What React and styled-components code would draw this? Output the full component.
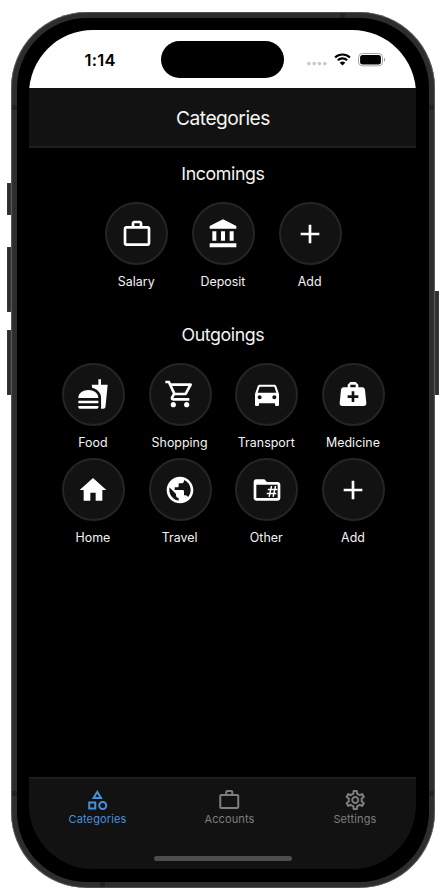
import React from "react";
import styled, { createGlobalStyle, css } from "styled-components";
import {
  MdWorkOutline,
  MdAccountBalance,
  MdAdd,
  MdFastfood,
  MdOutlineShoppingCart,
  MdDirectionsCar,
  MdHome,
  MdPublic,
  MdOutlineCategory,
  MdOutlineSettings,
} from "react-icons/md";

const GlobalStyle = createGlobalStyle`
  * { box-sizing: border-box; }
  body {
    margin: 0;
    background: #fff;
    font-family: Inter, "Liberation Sans", sans-serif;
  }
`;

const Stage = styled.main`
  width: 446px;
  height: 890px;
  padding: 12px 11.3px 2.3px 11.2px;
  overflow: hidden;
`;

const Phone = styled.div`
  position: relative;
  width: 100%;
  height: 875.5px;
  padding: 6px;
  border-radius: 76px;
  background: #2d2d2d;
  box-shadow: inset 0 0 1px 0.6px #777;
`;

const Bezel = styled.div`
  position: relative;
  height: 100%;
  padding: 12.3px;
  border-radius: 70px;
  background: #000;
`;

const SideButton = styled.span`
  position: absolute;
  top: ${(p) => p.$top}px;
  height: ${(p) => p.$height}px;
  width: 4px;
  background: #2f2f2f;
  box-shadow: inset 0 0 1px #777;
  ${(p) => (p.$right ? css`right: -4px;` : css`left: -4px;`)}
`;

const Antenna = styled.span`
  position: absolute;
  background: #222;
  width: ${(p) => (p.$vertical ? 5 : 6)}px;
  height: ${(p) => (p.$vertical ? 6 : 5)}px;
  ${(p) => p.$edge}
`;

const Screen = styled.div`
  display: flex;
  flex-direction: column;
  height: 100%;
  border-radius: 64px;
  overflow: hidden;
  background: #000;
  color: #f4f4f4;
`;

const StatusBar = styled.div`
  display: grid;
  grid-template-columns: 132px 123px 1fr;
  flex: none;
  height: 58.2px;
  padding-top: 11px;
  background: #fff;
  color: #000;
`;

const Clock = styled.time`
  padding: 8.4px 0 0 55px;
  font-size: 16.5px;
  line-height: 20px;
  font-weight: 600;
  letter-spacing: 0.3px;
`;

const Island = styled.div`
  height: 36.5px;
  border-radius: 19px;
  background: #000;
`;

const StatusIcons = styled.div`
  display: flex;
  align-items: flex-start;
  padding: 10.6px 0 0 22.7px;
`;

const Header = styled.header`
  flex: none;
  display: flex;
  align-items: center;
  justify-content: center;
  height: 59.4px;
  background: #121212;
  border-bottom: 2px solid #1d1d1d;
`;

const Title = styled.h1`
  margin: 2px 0 0;
  font-size: 19.2px;
  line-height: 24px;
  font-weight: 400;
  letter-spacing: -0.5px;
`;

const Content = styled.div`
  flex: 1;
  padding-top: 14.6px;
`;

const Section = styled.section`
  height: 160.5px;
`;

const SectionTitle = styled.h2`
  margin: 0 0 16px;
  font-size: 17.8px;
  line-height: 24px;
  font-weight: 400;
  letter-spacing: -0.4px;
  text-align: center;
`;

const CategoryGrid = styled.div`
  display: flex;
  flex-wrap: wrap;
  justify-content: center;
  width: 347.2px;
  margin: 0 auto;
  row-gap: 0.5px;
`;

const Category = styled.button`
  display: flex;
  flex-direction: column;
  align-items: center;
  width: 86.7px;
  height: 95px;
  padding: 0;
  border: 0;
  background: none;
  color: #f4f4f4;
  font: 400 12.4px/18px Inter, sans-serif;
  letter-spacing: 0.03px;
`;

const Circle = styled.span`
  display: grid;
  place-items: center;
  width: 63px;
  height: 63px;
  margin: 0 0 7.7px 1px;
  border: 2px solid #252525;
  border-radius: 50%;
  background: #121212;
  color: #fff;

  svg {
    width: 32px;
    height: 32px;
  }
`;

const TabBar = styled.nav`
  position: relative;
  flex: none;
  display: grid;
  grid-template-columns: 136px 128px 1fr;
  height: 92.5px;
  padding-top: 9.5px;
  border-top: 2px solid #1d1d1d;
  background: #121212;
`;

const Tab = styled.a`
  display: flex;
  flex-direction: column;
  align-items: center;
  color: ${(p) => (p.$active ? "#4a90d9" : "#7e7e7e")};
  font-size: 11px;
  line-height: 14px;
  letter-spacing: 0.12px;

  svg {
    width: 24.5px;
    height: 24px;
  }
`;

const HomeIndicator = styled.span`
  position: absolute;
  left: 125px;
  bottom: 8px;
  width: 138px;
  height: 5px;
  border-radius: 3px;
  background: #4d4d4d;
`;

const MedicalBag = () => (
  <svg viewBox="0 0 24 24" fill="currentColor">
    <path d="M10 3 8 5v2H5C3.85 7 3.12 8 3 9L2 19c-.12 1 .54 2 2 2h16c1.46 0 2.12-1 2-2L21 9c-.12-1-.94-2-2-2h-3V5l-2-2h-4m0 2h4v2h-4V5m1 5h2v3h3v2h-3v3h-2v-3H8v-2h3v-3Z" />
  </svg>
);

const FolderPound = () => (
  <svg viewBox="0 0 24 24" fill="currentColor">
    <path d="M20 18H4V8h16m0-2h-8l-2-2H4c-1.1 0-2 .89-2 2v12c0 1.11.9 2 2 2h16c1.11 0 2-.89 2-2V8c0-1.1-.89-2-2-2Z" />
    <path
      d="M15.4 9 13.6 17.2M18.4 9 16.6 17.2M12.6 11.6h7.2M11.8 14.6h7.2"
      fill="none"
      stroke="currentColor"
      strokeWidth="1.1"
    />
  </svg>
);

const CellDots = () => (
  <svg width="20" height="18" viewBox="0 0 20 18" fill="#c9c9c9">
    <circle cx="1.9" cy="11.6" r="1.8" />
    <circle cx="7.2" cy="11.6" r="1.8" />
    <circle cx="12.5" cy="11.6" r="1.8" />
    <circle cx="17.8" cy="11.6" r="1.8" />
  </svg>
);

const WifiGlyph = styled.svg`
  margin: 1px 0 0 6.7px;
`;

const Wifi = () => (
  <WifiGlyph width="17" height="13" viewBox="0 0 17 13">
    <path d="M1.1 4.5a10.6 10.6 0 0 1 14.8 0M3.8 7.3a6.8 6.8 0 0 1 9.4 0" fill="none" stroke="#000" strokeWidth="2.2" />
    <path d="M8.5 12.6 5.7 9.8a4 4 0 0 1 5.6 0Z" />
  </WifiGlyph>
);

const BatteryGlyph = styled.svg`
  margin: 1px 0 0 6.7px;
`;

const Battery = () => (
  <BatteryGlyph width="28" height="14" viewBox="0 0 28 14">
    <rect x="0.5" y="0.5" width="24" height="12.4" rx="3.8" fill="none" stroke="#a5a5a5" />
    <rect x="2.1" y="2" width="20.8" height="9.4" rx="2.5" />
    <path d="M26 4.7v4c1.5-.6 1.5-3.4 0-4Z" fill="#999" />
  </BatteryGlyph>
);

const incomings = [
  { label: "Salary", Icon: MdWorkOutline },
  { label: "Deposit", Icon: MdAccountBalance },
  { label: "Add", Icon: MdAdd },
];

const outgoings = [
  { label: "Food", Icon: MdFastfood },
  { label: "Shopping", Icon: MdOutlineShoppingCart },
  { label: "Transport", Icon: MdDirectionsCar },
  { label: "Medicine", Icon: MedicalBag },
  { label: "Home", Icon: MdHome },
  { label: "Travel", Icon: MdPublic },
  { label: "Other", Icon: FolderPound },
  { label: "Add", Icon: MdAdd },
];

const CategorySection = ({ title, items }) => (
  <Section>
    <SectionTitle>{title}</SectionTitle>
    <CategoryGrid>
      {items.map(({ label, Icon }) => (
        <Category key={label}>
          <Circle>
            <Icon />
          </Circle>
          {label}
        </Category>
      ))}
    </CategoryGrid>
  </Section>
);

export default function App() {
  return (
    <Stage>
      <GlobalStyle />
      <Phone>
        <SideButton $top={170.5} $height={32.5} />
        <SideButton $top={234.5} $height={65} />
        <SideButton $top={318} $height={65} />
        <SideButton $right $top={279} $height={104} />
        <Antenna $edge="left: 0.5px; top: 92.5px;" />
        <Antenna $edge="right: 0.5px; top: 92.5px;" />
        <Antenna $edge="left: 0.5px; bottom: 91.5px;" />
        <Antenna $edge="right: 0.5px; bottom: 91.5px;" />
        <Antenna $vertical $edge="right: 89.5px; top: 0.5px;" />
        <Antenna $vertical $edge="left: 88.5px; bottom: 0.5px;" />
        <Bezel>
          <Screen>
            <StatusBar>
              <Clock>1:14</Clock>
              <Island />
              <StatusIcons>
                <CellDots />
                <Wifi />
                <Battery />
              </StatusIcons>
            </StatusBar>
            <Header>
              <Title>Categories</Title>
            </Header>
            <Content>
              <CategorySection title="Incomings" items={incomings} />
              <CategorySection title="Outgoings" items={outgoings} />
            </Content>
            <TabBar>
              <Tab $active>
                <MdOutlineCategory />
                Categories
              </Tab>
              <Tab>
                <MdWorkOutline />
                Accounts
              </Tab>
              <Tab>
                <MdOutlineSettings />
                Settings
              </Tab>
              <HomeIndicator />
            </TabBar>
          </Screen>
        </Bezel>
      </Phone>
    </Stage>
  );
}
